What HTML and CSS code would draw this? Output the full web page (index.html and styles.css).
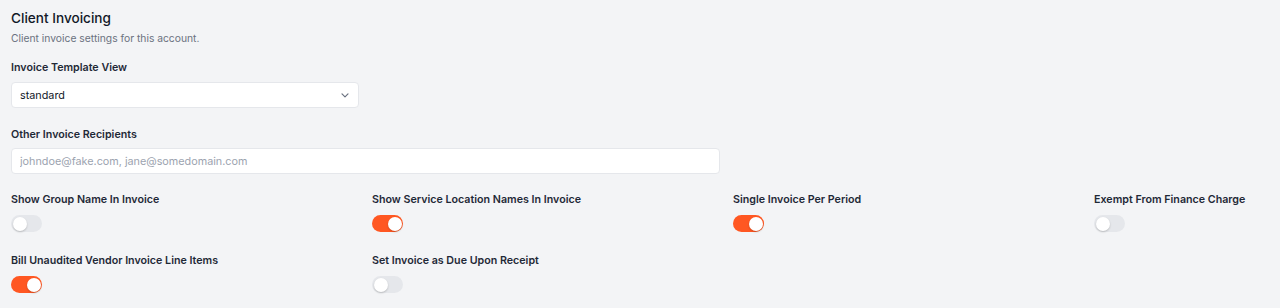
FILE: index.html
```html
<html>
<head>
<title>Client Invoicing</title>
<link rel="stylesheet" href="styles.css">
</head>
<body>
<div class="panel">
  <h2 class="title">Client Invoicing</h2>
  <p class="subtitle">Client invoice settings for this account.</p>

  <div class="field first">
    <label class="label">Invoice Template View</label>
    <div class="select">
      <span>standard</span>
      <svg width="12" height="12" viewBox="0 0 20 20" fill="none" stroke="#6b7280" stroke-width="2" stroke-linecap="round" stroke-linejoin="round"><path d="M5 8l5 5 5-5"/></svg>
    </div>
  </div>

  <div class="field">
    <label class="label">Other Invoice Recipients</label>
    <input class="text" type="text" placeholder="johndoe@fake.com, jane@somedomain.com">
  </div>

  <div class="toggles">
    <div class="item">
      <label class="label">Show Group Name In Invoice</label>
      <span class="switch"></span>
    </div>
    <div class="item">
      <label class="label">Show Service Location Names In Invoice</label>
      <span class="switch on"></span>
    </div>
    <div class="item">
      <label class="label">Single Invoice Per Period</label>
      <span class="switch on"></span>
    </div>
    <div class="item">
      <label class="label">Exempt From Finance Charge</label>
      <span class="switch"></span>
    </div>
    <div class="item">
      <label class="label">Bill Unaudited Vendor Invoice Line Items</label>
      <span class="switch on"></span>
    </div>
    <div class="item">
      <label class="label">Set Invoice as Due Upon Receipt</label>
      <span class="switch"></span>
    </div>
  </div>
</div>
</body>
</html>
```
FILE: styles.css
```css
body {
  margin: 0;
  background-color: #f3f4f6;
  font-family: Inter, "Noto Sans", sans-serif;
  color: #111827;
  overflow: hidden;
}

.panel {
  padding: 8px 11px;
}

.title {
  margin: 0;
  font-size: 13.6px;
  font-weight: 500;
  line-height: 20px;
  color: #111827;
}

.subtitle {
  margin: 2px 0 0 0;
  font-size: 10.3px;
  line-height: 16px;
  color: #6b7280;
}

.field {
  margin-top: 19px;
}

.field.first {
  margin-top: 14px;
}

.label {
  display: block;
  font-size: 10.7px;
  font-weight: 600;
  line-height: 16px;
  color: #1f2937;
}

.select {
  margin-top: 6px;
  width: 348px;
  height: 26px;
  box-sizing: border-box;
  background: #ffffff;
  border: 1px solid #e5e7eb;
  border-radius: 4px;
  display: flex;
  align-items: center;
  justify-content: space-between;
  padding: 0 7px 0 8px;
  font-size: 10.8px;
  color: #111827;
}

.text {
  display: block;
  margin-top: 5px;
  width: 709px;
  height: 26px;
  box-sizing: border-box;
  background: #ffffff;
  border: 1px solid #e5e7eb;
  border-radius: 4px;
  padding: 0 8px;
  font-family: inherit;
  font-size: 10.8px;
}

.text::placeholder {
  color: #9ca3af;
}

.toggles {
  margin-top: 18px;
  display: grid;
  grid-template-columns: repeat(4, 348px);
  column-gap: 13px;
  row-gap: 21px;
}

.switch {
  display: block;
  position: relative;
  margin-top: 7px;
  width: 31px;
  height: 17px;
  border-radius: 9px;
  background: #e5e7eb;
}

.switch::after {
  content: "";
  position: absolute;
  top: 1.5px;
  left: 1.5px;
  width: 14px;
  height: 14px;
  border-radius: 50%;
  background: #ffffff;
  box-shadow: 0 1px 2px rgba(0,0,0,0.2);
}

.switch.on {
  background: #ff5722;
}

.switch.on::after {
  left: 15.5px;
}
```
